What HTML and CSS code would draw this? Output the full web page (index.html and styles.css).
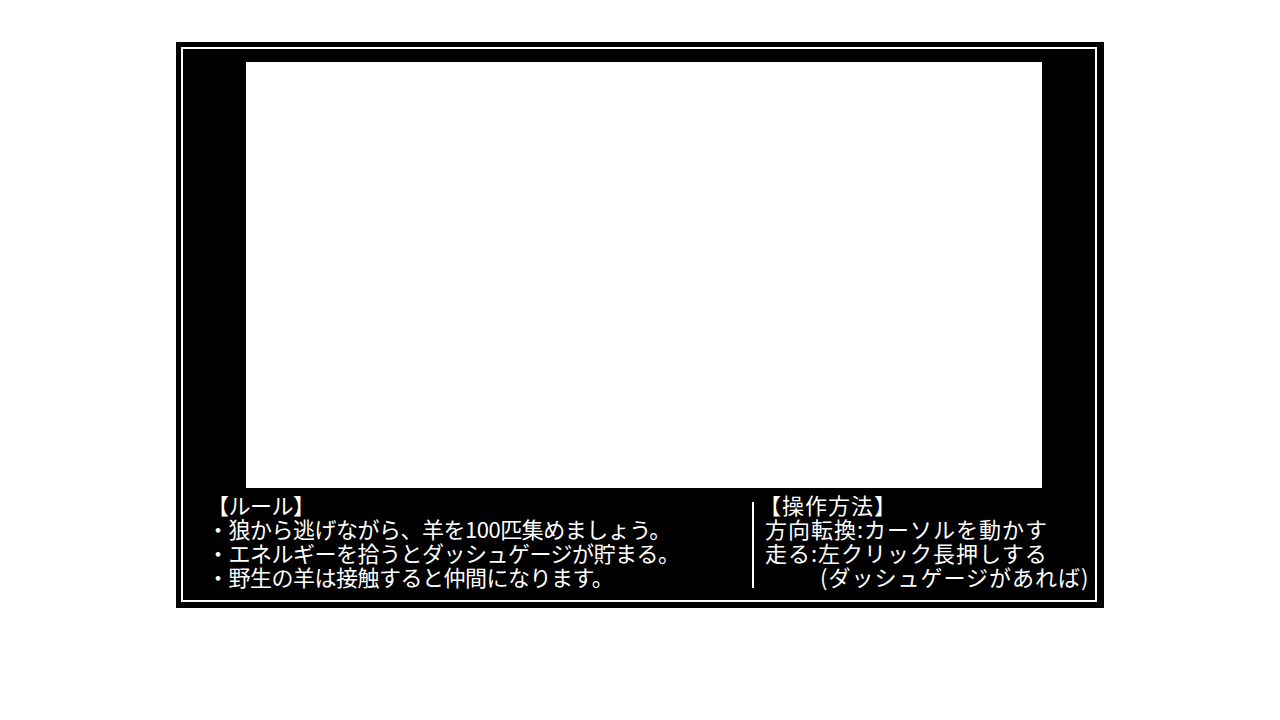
FILE: index.html
```html
<!DOCTYPE html>
<html lang="ja">
<head>
<meta charset="utf-8">
<title>羊集め</title>
<link rel="stylesheet" href="styles.css">
</head>
<body>
<div class="frame">
  <div class="inner">
    <div class="canvas"></div>
    <div class="info">
      <div class="rules">
        <div class="line">【ルール】</div>
        <div class="line">・狼から逃げながら、羊を100匹集めましょう。</div>
        <div class="line">・エネルギーを拾うとダッシュゲージが貯まる。</div>
        <div class="line">・野生の羊は接触すると仲間になります。</div>
      </div>
      <div class="divider"></div>
      <div class="controls">
        <div class="line heading">【操作方法】</div>
        <div class="line">方向転換:カーソルを動かす</div>
        <div class="line">走る:左クリック長押しする</div>
        <div class="line indent">(ダッシュゲージがあれば)</div>
      </div>
    </div>
  </div>
</div>
</body>
</html>
```

FILE: styles.css
```css
html, body {
  margin: 0;
  padding: 0;
  background: #fff;
}

.frame {
  width: 928px;
  height: 566px;
  box-sizing: border-box;
  margin: 42px auto 0;
  background: #000;
  padding: 5px 7px 6px 5px;
}

.inner {
  height: 100%;
  box-sizing: border-box;
  border: 2px solid #fff;
  display: flex;
  flex-direction: column;
}

.canvas {
  width: 796px;
  height: 426px;
  margin: 13px 0 0 63px;
  background: #fff;
}

.info {
  display: flex;
  padding-top: 4px;
  font-family: "Noto Sans CJK JP", "Noto Sans", sans-serif;
  line-height: 24px;
  color: #fff;
}

.rules {
  flex: 0 0 569px;
  box-sizing: border-box;
  padding-left: 24px;
  font-size: 22px;
  letter-spacing: -0.5px;
}

.divider {
  width: 2px;
  height: 86px;
  margin-top: 10px;
  background: #fff;
}

.controls {
  padding-left: 11px;
  font-size: 22px;
  letter-spacing: 1px;
}

.line {
  white-space: nowrap;
}

.heading {
  margin-left: -6px;
}

.indent {
  padding-left: 55px;
}
```
